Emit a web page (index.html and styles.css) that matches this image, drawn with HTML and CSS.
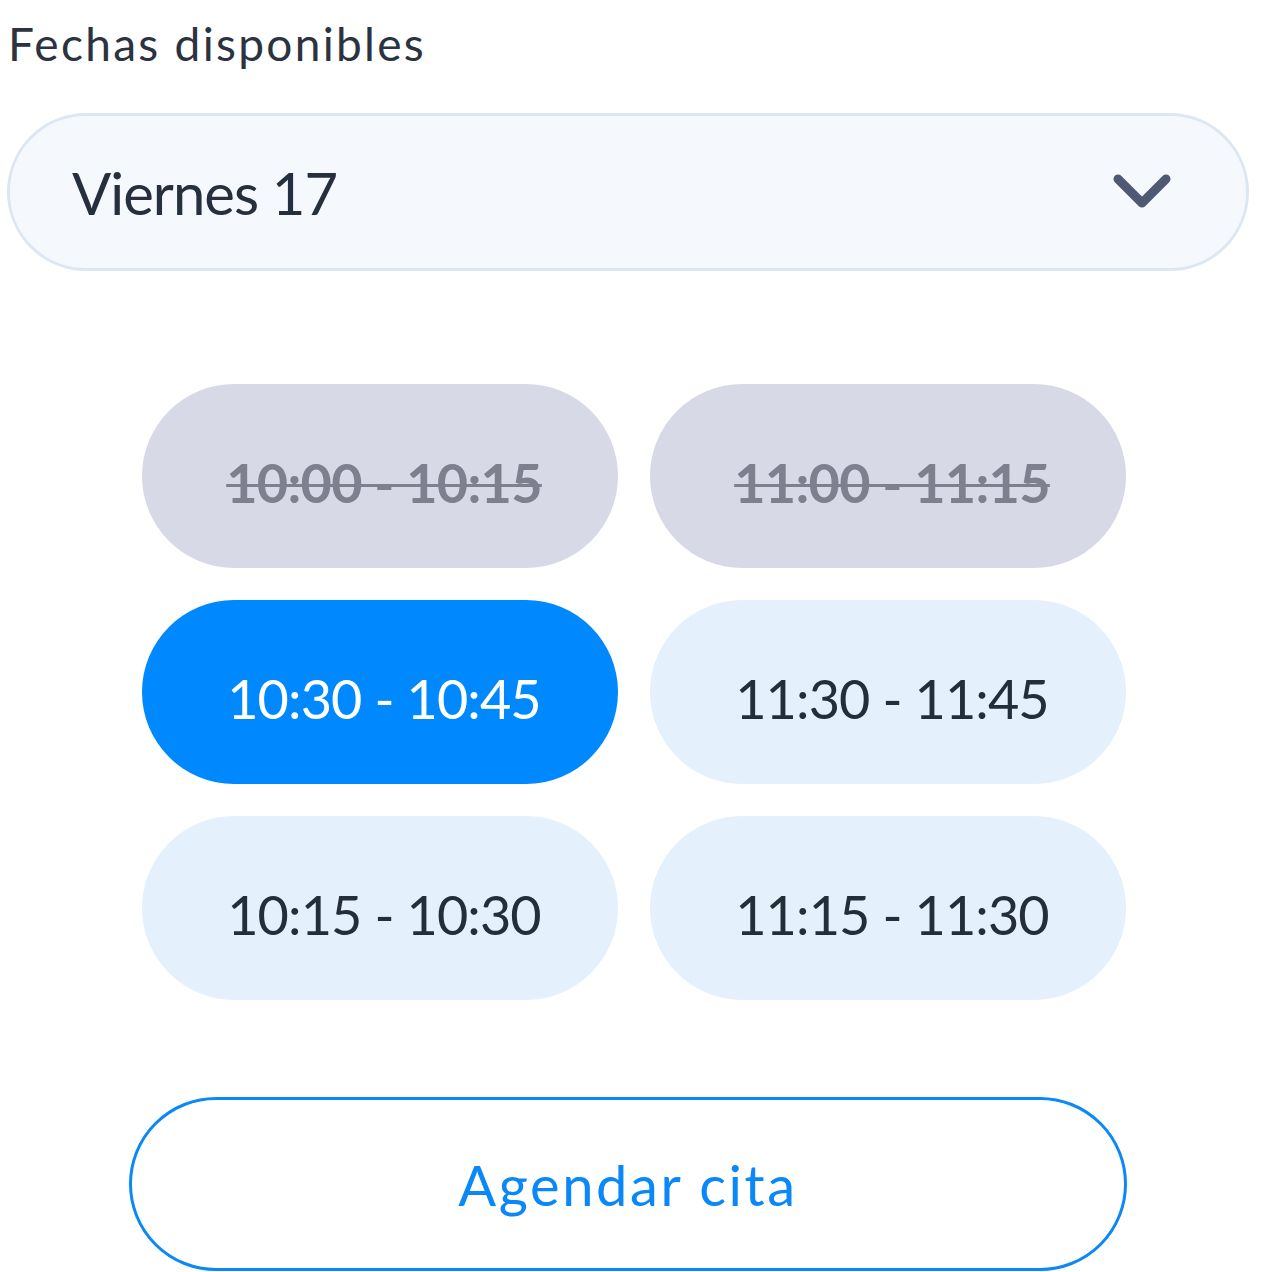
FILE: index.html
```html
<!DOCTYPE html>
<html>
<head>
	<meta charset="UTF-8">
	<title>Fechas disponibles</title>
	<link rel="stylesheet" href="styles.css">
</head>
<body>
	<div class="booking">
		<p class="label">Fechas disponibles</p>
		<div class="select">
			<span class="select-value">Viernes 17</span>
			<svg class="chevron" width="60" height="38" viewBox="0 0 60 38">
				<path d="M6 6 L30 30 L54 6" fill="none" stroke="#4f5a72" stroke-width="9" stroke-linecap="round" stroke-linejoin="round"/>
			</svg>
		</div>
		<div class="slots">
			<span class="slot taken">10:00 - 10:15</span>
			<span class="slot taken">11:00 - 11:15</span>
			<span class="slot active">10:30 - 10:45</span>
			<span class="slot">11:30 - 11:45</span>
			<span class="slot">10:15 - 10:30</span>
			<span class="slot">11:15 - 11:30</span>
		</div>
		<a href="#" class="submit">Agendar cita</a>
	</div>
</body>
</html>
```

FILE: styles.css
```css
*{
	margin: 0;
	padding: 0;
	box-sizing: border-box;
}
body{
	background: #fff;
	font-family: "Lato", "Noto Sans", sans-serif;
	color: #262f3d;
}
.booking{
	width: 1242px;
	margin-left: 7px;
}
.label{
	font-size: 46px;
	line-height: 88px;
	height: 113px;
	padding-left: 1px;
	letter-spacing: 2.3px;
	color: #2b3240;
}
.select{
	display: flex;
	align-items: center;
	justify-content: space-between;
	height: 158px;
	padding: 0 74px 0 62px;
	background: #f5f9fe;
	border: 3px solid #dde6f3;
	border-radius: 79px;
}
.select-value{
	font-size: 58px;
	letter-spacing: -1px;
	color: #262f3d;
}
.slots{
	display: grid;
	grid-template-columns: 476px 476px;
	grid-auto-rows: 184px;
	gap: 32px;
	margin: 113px 0 0 135px;
}
.slot{
	display: flex;
	align-items: center;
	justify-content: center;
	border-radius: 92px;
	background: #e4f1fd;
	color: #242e3b;
	font-size: 54px;
	letter-spacing: -0.9px;
	padding: 12px 0 0 8px;
}
.slot.taken{
	background: #d8d9e6;
	color: #7e808f;
	font-weight: 700;
	letter-spacing: -0.7px;
	text-decoration: line-through;
	text-decoration-thickness: 3px;
}
.slot.active{
	background: #0088ff;
	color: #fff;
}
.submit{
	display: flex;
	align-items: center;
	justify-content: center;
	width: 998px;
	height: 174px;
	margin: 97px 0 0 122px;
	border: 3px solid #0a88f7;
	border-radius: 87px;
	color: #0a88f7;
	font-size: 56px;
	letter-spacing: 2.6px;
	text-decoration: none;
}
```
